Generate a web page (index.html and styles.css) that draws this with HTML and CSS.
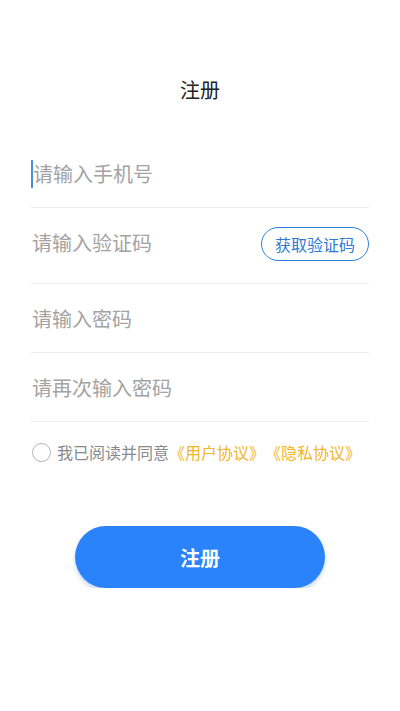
FILE: index.html
```html
<!DOCTYPE html>
<html lang="zh-CN">
<head>
<meta charset="utf-8">
<title>注册</title>
<link rel="stylesheet" href="styles.css">
</head>
<body>
<div class="page">
  <h1 class="title">注册</h1>
  <form class="form">
    <div class="row">
      <span class="caret"></span>
      <input class="field" type="tel" placeholder="请输入手机号">
    </div>
    <div class="row row-code">
      <input class="field" type="text" placeholder="请输入验证码">
      <button type="button" class="code-btn">获取验证码</button>
    </div>
    <div class="row">
      <input class="field" type="password" placeholder="请输入密码">
    </div>
    <div class="row">
      <input class="field" type="password" placeholder="请再次输入密码">
    </div>
    <label class="agree">
      <span class="check"></span>
      <span class="agree-text">我已阅读并同意<span class="link">《用户协议》</span><span class="link">《隐私协议》</span></span>
    </label>
    <div class="submit-wrap">
      <button type="button" class="submit">注册</button>
    </div>
  </form>
</div>
</body>
</html>
```

FILE: styles.css
```css
* { box-sizing: border-box; }
html, body {
  margin: 0;
  padding: 0;
  background: #ffffff;
}
body {
  font-family: "Noto Sans CJK SC", "Noto Sans", sans-serif;
  color: #333333;
  text-spacing-trim: space-all;
}
.page {
  padding: 70px 31px 0;
}
.title {
  margin: 0;
  height: 40px;
  line-height: 40px;
  text-align: center;
  font-size: 20px;
  font-weight: 400;
  color: #222222;
}
.form {
  margin-top: 29px;
  display: flex;
  flex-direction: column;
}
.row {
  display: flex;
  align-items: center;
  padding: 14px 0 10px;
  border-bottom: 1px solid #ececec;
}
.row-code {
  padding-bottom: 17px;
}
.field {
  flex: 1;
  min-width: 0;
  height: 44px;
  border: 0;
  outline: none;
  padding: 0 0 4px 1px;
  margin: 0;
  background: transparent;
  font-family: inherit;
  font-size: 20px;
  color: #333333;
}
.field::placeholder {
  color: #a3a3a3;
}
.caret {
  width: 2px;
  height: 28px;
  margin-top: -3px;
  background: #4a8ed6;
  flex: none;
}
.caret + .field {
  padding-left: 0;
}
.code-btn {
  flex: none;
  height: 34px;
  padding: 0 13px;
  border: 1px solid #2f80d9;
  border-radius: 17px;
  background: #ffffff;
  color: #2f7ad0;
  font-family: inherit;
  font-size: 16px;
  line-height: 32px;
}
.agree {
  margin-top: 21px;
  display: flex;
  align-items: center;
  gap: 6px;
  padding-left: 1px;
}
.check {
  width: 19px;
  height: 19px;
  border: 1px solid #b5b5b5;
  border-radius: 50%;
  flex: none;
}
.agree-text {
  font-size: 16px;
  line-height: 19px;
  color: #8a8a8a;
  white-space: nowrap;
}
.link {
  color: #f2b52c;
}
.submit-wrap {
  margin-top: 64px;
  display: flex;
  justify-content: center;
}
.submit {
  width: 250px;
  height: 62px;
  border: 0;
  border-radius: 31px;
  background: #2a83fb;
  color: #ffffff;
  font-family: inherit;
  font-size: 20px;
  font-weight: 700;
  box-shadow: 0 3px 4px rgba(40, 100, 200, 0.25);
}
```
